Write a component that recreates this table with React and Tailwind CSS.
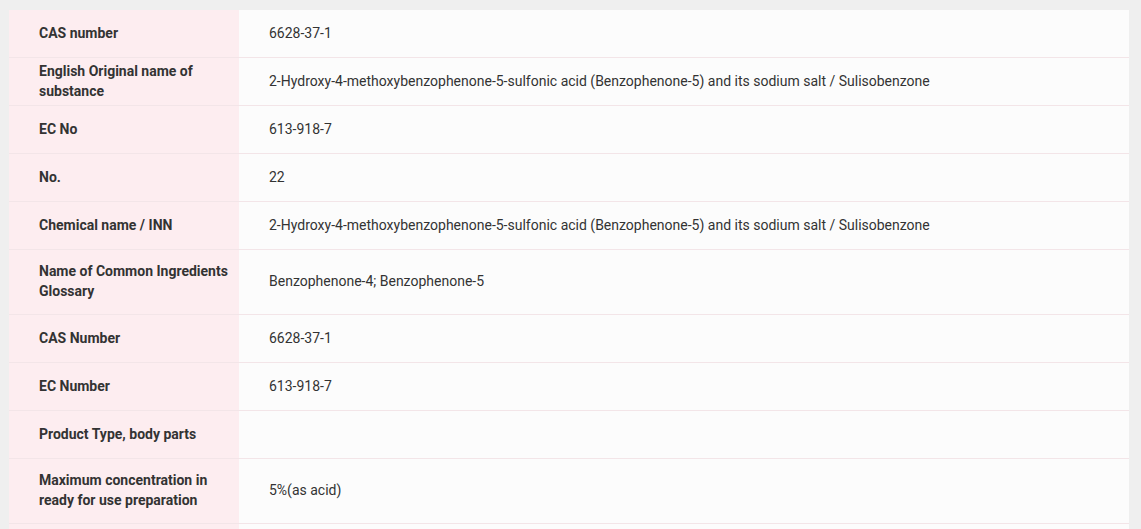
const rows = [
  ["CAS number", "6628-37-1"],
  ["English Original name of substance", "2-Hydroxy-4-methoxybenzophenone-5-sulfonic acid (Benzophenone-5) and its sodium salt / Sulisobenzone"],
  ["EC No", "613-918-7"],
  ["No.", "22"],
  ["Chemical name / INN", "2-Hydroxy-4-methoxybenzophenone-5-sulfonic acid (Benzophenone-5) and its sodium salt / Sulisobenzone"],
  ["Name of Common Ingredients Glossary", "Benzophenone-4; Benzophenone-5", true],
  ["CAS Number", "6628-37-1"],
  ["EC Number", "613-918-7"],
  ["Product Type, body parts", ""],
  ["Maximum concentration in ready for use preparation", "5%(as acid)", true],
  ["", ""],
];

export default function App() {
  return (
    <main
      className="min-h-screen bg-[#efefef] pl-[9px] pr-[12px] pt-[10px]"
      style={{ fontFamily: "Roboto, 'Open Sans', sans-serif" }}
    >
      <div className="w-[1120px]">
        {rows.map(([label, value, tall], i) => (
          <div
            key={i}
            className={
              "flex border-b border-[#f3e5e8] text-[14px] leading-5 text-[#333] " +
              (tall ? "h-[65px]" : "h-[48px]")
            }
          >
            <div className="w-[230px] shrink-0 bg-[#fdedf0] flex items-center pl-[30px] pr-2 pb-[2px] font-bold">
              {label}
            </div>
            <div className="flex-1 bg-[#fcfcfc] flex items-center pl-[30px] pr-4 pb-[2px]">
              {value}
            </div>
          </div>
        ))}
      </div>
    </main>
  );
}
